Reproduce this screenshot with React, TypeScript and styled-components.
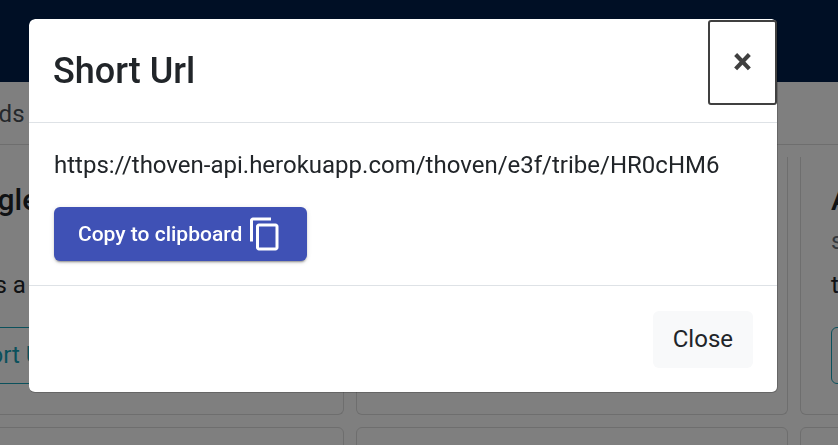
import React from "react";
import styled, { createGlobalStyle } from "styled-components";

const GlobalStyle = createGlobalStyle`
  *, *::before, *::after { box-sizing: border-box; }
  body {
    margin: 0;
    font: 400 24px/36px Roboto, "Liberation Sans", sans-serif;
    color: #212529;
    background: #fff;
  }
  h2, h3, p { margin: 0; }
  button { font-family: inherit; cursor: pointer; }
`;

const Page = styled.div`
  height: 100vh;
  overflow: hidden;
  display: flex;
  flex-direction: column;
`;

const TopBar = styled.header`
  flex: none;
  height: 82px;
  background: #001e4a;
`;

const Crumbs = styled.nav`
  flex: none;
  display: flex;
  align-items: center;
  height: 63px;
  margin-left: -51px;
  padding-top: 2px;
  color: #495057;
  border-bottom: 1px solid #dcdcdc;
`;

const Board = styled.main`
  flex: 1;
  min-height: 0;
  overflow: hidden;
  margin: 12px 0 0 -88px;
  display: grid;
  grid-template-columns: repeat(3, 432px);
  grid-auto-rows: 258px;
  gap: 12px;
`;

const Card = styled.article<{ $continued?: boolean }>`
  display: flex;
  flex-direction: column;
  align-items: flex-start;
  padding: 25px 30px 30px;
  border: 1px solid #dcdcdc;
  border-top-width: ${(p) => (p.$continued ? "0" : "1px")};
  border-radius: ${(p) => (p.$continued ? "0 0 6px 6px" : "6px")};
`;

const CardTitle = styled.h3`
  font-size: 30px;
  line-height: 36px;
  font-weight: 500;
`;

const CardSubtitle = styled.p`
  min-height: 36px;
  margin-top: 5px;
  color: #6c757d;
`;

const CardText = styled.p`
  margin-top: 8px;
`;

const OutlineButton = styled.button`
  height: 57px;
  margin-top: auto;
  padding: 0 18px 2px;
  font-size: 24px;
  color: #17a2b8;
  background: transparent;
  border: 1px solid #17a2b8;
  border-radius: 6px;
`;

const Backdrop = styled.div`
  position: fixed;
  inset: 0;
  overflow: auto;
  padding: 19px 60px 19px 29px;
  background: rgba(0, 0, 0, 0.5);
`;

const Dialog = styled.section`
  background: #fff;
  background-clip: padding-box;
  border: 1px solid rgba(0, 0, 0, 0.2);
  border-width: 0 1px 1px 0;
  border-radius: 6px;
`;

const DialogHeader = styled.header`
  display: flex;
  align-items: flex-start;
  justify-content: space-between;
  border-bottom: 1px solid #dee2e6;
`;

const DialogTitle = styled.h2`
  padding: 25px 24px 24px;
  font-size: 36px;
  line-height: 54px;
  font-weight: 500;
`;

const DismissButton = styled.button`
  width: 69px;
  height: 85px;
  margin-top: 1px;
  padding: 0 0 2px;
  font-size: 36px;
  line-height: 36px;
  font-weight: 700;
  color: #404040;
  background: transparent;
  border: 2px solid #404040;
  border-radius: 3px;
`;

const DialogBody = styled.div`
  display: flex;
  flex-direction: column;
  align-items: flex-start;
  gap: 24px;
  padding: 24px 25px;
  border-bottom: 1px solid #dee2e6;
`;

const ShortUrl = styled.p`
  overflow-wrap: anywhere;
`;

const CopyButton = styled.button`
  display: flex;
  align-items: center;
  gap: 5px;
  height: 54px;
  padding: 0 24px;
  font-size: 21px;
  font-weight: 500;
  color: #fff;
  background: #3f51b5;
  border: 0;
  border-radius: 6px;
  box-shadow: 0 3px 1px -2px rgba(0, 0, 0, 0.2), 0 2px 2px rgba(0, 0, 0, 0.14),
    0 1px 5px rgba(0, 0, 0, 0.12);
`;

const DialogFooter = styled.footer`
  display: flex;
  justify-content: flex-end;
  padding: 25px 24px 24px;
`;

const CloseButton = styled.button`
  height: 57px;
  padding: 0 20px 2px;
  font-size: 24px;
  color: #212529;
  background: #f8f9fa;
  border: 0;
  border-radius: 6px;
`;

function CopyIcon() {
  return (
    <svg width="36" height="36" viewBox="0 0 24 24" fill="currentColor" aria-hidden="true">
      <path d="M16 1H4c-1.1 0-2 .9-2 2v14h2V3h12V1zm3 4H8c-1.1 0-2 .9-2 2v14c0 1.1.9 2 2 2h11c1.1 0 2-.9 2-2V7c0-1.1-.9-2-2-2zm0 16H8V7h11v14z" />
    </svg>
  );
}

const url = "https://thoven-api.herokuapp.com/thoven/e3f/tribe/HR0cHM6";

export default function App() {
  return (
    <>
      <GlobalStyle />
      <Page>
        <TopBar />
        <Crumbs>Boards</Crumbs>
        <Board>
          <Card $continued>
            <CardTitle>Google</CardTitle>
            <CardSubtitle />
            <CardText>It was a</CardText>
            <OutlineButton type="button">Short Url</OutlineButton>
          </Card>
          <Card $continued />
          <Card $continued>
            <CardTitle>A</CardTitle>
            <CardSubtitle>s</CardSubtitle>
            <CardText>t</CardText>
            <OutlineButton type="button">Short Url</OutlineButton>
          </Card>
          <Card />
          <Card />
          <Card />
        </Board>
      </Page>
      <Backdrop>
        <Dialog role="dialog" aria-modal="true" aria-labelledby="dialog-title">
          <DialogHeader>
            <DialogTitle id="dialog-title">Short Url</DialogTitle>
            <DismissButton type="button" aria-label="Dismiss">×</DismissButton>
          </DialogHeader>
          <DialogBody>
            <ShortUrl>{url}</ShortUrl>
            <CopyButton type="button" onClick={() => navigator.clipboard?.writeText(url)}>
              Copy to clipboard
              <CopyIcon />
            </CopyButton>
          </DialogBody>
          <DialogFooter>
            <CloseButton type="button">Close</CloseButton>
          </DialogFooter>
        </Dialog>
      </Backdrop>
    </>
  );
}
